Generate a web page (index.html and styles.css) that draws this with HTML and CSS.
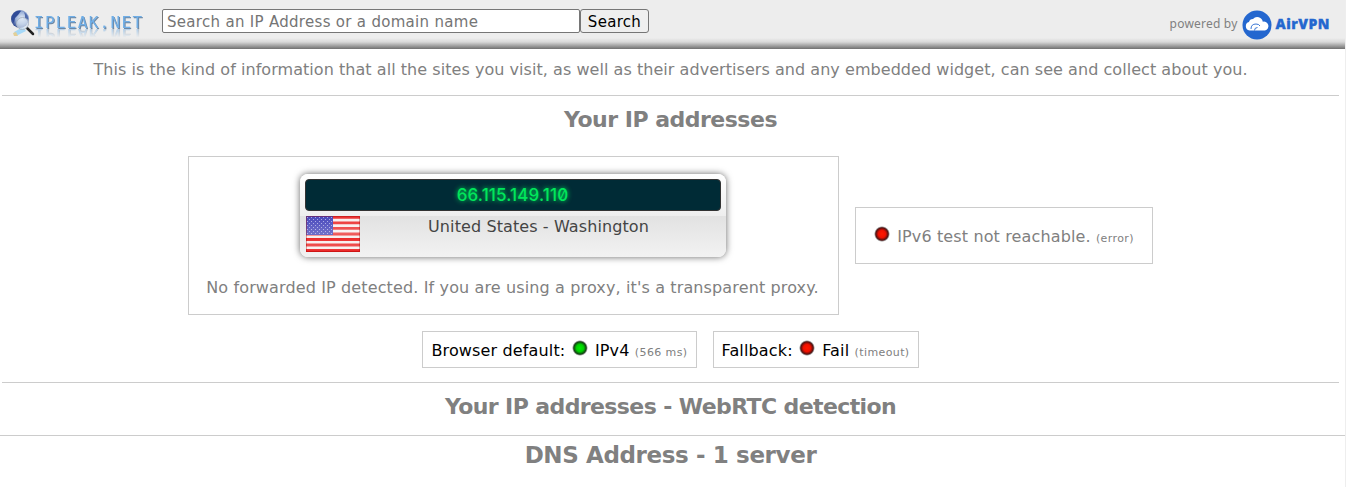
FILE: index.html
```html
<!DOCTYPE html>
<html lang="en">

<head>
    <meta charset="UTF-8">
    <meta name="viewport" content="width=device-width, initial-scale=1.0">
    <title>IP/DNS Detect</title>
    <link rel="stylesheet" href="styles.css">
</head>

<body>
    <div class="header">
        <a class="logo" href="/">
            <svg class="logo-icon" width="26" height="28" viewBox="0 0 26 28">
                <defs>
                    <radialGradient id="globe" cx="0.6" cy="0.45" r="0.65">
                        <stop offset="0" stop-color="#e6edf8" />
                        <stop offset="0.5" stop-color="#9db2d9" />
                        <stop offset="1" stop-color="#1c3684" />
                    </radialGradient>
                </defs>
                <path d="M4 23l9-5 3 4-10 5z" fill="#a5d8f8" />
                <path d="M3 24l3-1 2 4-4 0z" fill="#e3cf97" />
                <path d="M17 19l6 6" stroke="#222" stroke-width="2.5" stroke-linecap="round" />
                <circle cx="10" cy="10" r="9" fill="url(#globe)" />
                <path d="M2 7q3-6 9-5l-3 4-3 3-1 5q-3-3-2-7z" fill="#304b98" />
                <path d="M14 3q5 3 4 8l-3-2 0-3z" fill="#506aac" />
                <circle cx="12.5" cy="14.5" r="6" fill="#dce7f2" fill-opacity="0.65" stroke="#aab5c5" />
            </svg>
            <span class="logo-text">IPLEAK.NET</span>
        </a>
        <form class="search">
            <input type="text" placeholder="Search an IP Address or a domain name">
            <button type="button">Search</button>
        </form>
        <a class="powered" href="#">
            <span class="powered-by">powered by</span>
            <svg width="30" height="30" viewBox="0 0 30 30">
                <circle cx="15" cy="15" r="14.5" fill="#2467cf" />
                <path d="M7.500 20.500a4.300 4.300 0 0 1-.5-8.400 4 4 0 0 1 4-3.200 5.600 5.600 0 0 1 9.800 2.800 4.500 4.500 0 0 1 2.200 8.800z" fill="#fff" />
                <path d="M9 19q0-5 5-5 3 0 4 2M12.500 20.500q0-3 3-3" fill="none" stroke="#2467cf" stroke-width="0.900" />
            </svg>
            <span class="powered-name">AirVPN</span>
        </a>
    </div>

    <div class="content">
        <div class="intro">This is the kind of information that all the sites you visit, as well as their advertisers and any embedded widget, can see and collect about you.</div>

        <div class="section">
            <h2>Your IP addresses</h2>
            <div class="row">
                <div class="box box-ip">
                    <div class="ip-card">
                        <div class="ip">66.115.149.110</div>
                        <div class="ip-info">
                            <svg class="flag" width="54" height="36" viewBox="0 0 54 36">
                                <defs>
                                    <linearGradient id="gloss" x2="0" y2="1">
                                        <stop offset="0" stop-color="#fff" stop-opacity="0.1" />
                                        <stop offset="0.5" stop-color="#fff" stop-opacity="0.3" />
                                        <stop offset="0.6" stop-color="#fff" stop-opacity="0.05" />
                                        <stop offset="0.85" stop-color="#fff" stop-opacity="0.25" />
                                        <stop offset="1" stop-color="#fff" stop-opacity="0" />
                                    </linearGradient>
                                    <pattern id="stars" width="4" height="4" patternUnits="userSpaceOnUse">
                                        <path d="M1 1h1v1h-1zM3 3h1v1h-1z" fill="#9c9ce0" />
                                    </pattern>
                                </defs>
                                <rect width="54" height="36" fill="#f6eeee" />
                                <path d="M0 1.400h54M0 6.900h54M0 12.400h54M0 18h54M0 23.500h54M0 29h54M0 34.500h54" stroke="#ea1c1c" stroke-width="2.800" />
                                <rect width="27" height="19" fill="#3434b4" />
                                <rect width="27" height="19" fill="url(#stars)" />
                                <rect width="54" height="36" fill="url(#gloss)" />
                                <rect x="0.5" y="0.5" width="53" height="35" fill="none" stroke="#900" stroke-opacity="0.350" />
                            </svg>
                            <div class="place">United States - Washington</div>
                        </div>
                    </div>
                    <div class="forwarded">No forwarded IP detected. If you are using a proxy, it's a transparent proxy.</div>
                </div>
                <div class="box box-ipv6">
                    <span class="led led-red"></span>
                    <span>IPv6 test not reachable.</span>
                    <small>(error)</small>
                </div>
            </div>
            <div class="row row-modes">
                <div class="box box-mode">
                    <span>Browser default:</span>
                    <span class="led led-green"></span>
                    <span>IPv4</span>
                    <small>(566 ms)</small>
                </div>
                <div class="box box-mode">
                    <span>Fallback:</span>
                    <span class="led led-red"></span>
                    <span>Fail</span>
                    <small>(timeout)</small>
                </div>
            </div>
        </div>

        <div class="section section-webrtc">
            <h2>Your IP addresses - WebRTC detection</h2>
        </div>
    </div>

    <div class="section section-dns">
        <h2>DNS Address - 1 server</h2>
    </div>
</body>

</html>
```
FILE: styles.css
```css
* {
    box-sizing: border-box;
}

body {
    margin: 0;
    height: 487px;
    overflow: hidden;
    border-right: 1px solid #eeeeee;
    font-family: Verdana, "DejaVu Sans", sans-serif;
    font-size: 16px;
    line-height: 20px;
    color: gray;
    background: #ffffff;
}

a {
    color: inherit;
    text-decoration: none;
}

.header {
    display: flex;
    height: 49px;
    padding: 9px 15px 0 10px;
    background: linear-gradient(#ededed 0, #ededed 38px, #d8d8d8 42px, #707070 49px);
}

.logo {
    display: flex;
    width: 152px;
}

.logo-text {
    height: 18px;
    margin: 5px 0 0 -2px;
    font-family: "DejaVu Sans Mono", monospace;
    font-size: 16px;
    line-height: 18px;
    letter-spacing: 1.3px;
    color: #70aee6;
    text-shadow: 1px 1px 0 #6e88a4;
    -webkit-box-reflect: below -7px linear-gradient(transparent 30%, rgba(0, 0, 0, 0.7));
}

.search {
    display: flex;
    height: 24px;
}

.search input {
    width: 418px;
    padding: 2px 4px 1px;
    border: 1px solid #767676;
    border-radius: 2px;
    font: 15px Verdana, "DejaVu Sans", sans-serif;
    letter-spacing: 0.3px;
}

.search input::placeholder {
    color: #757575;
}

.search button {
    width: 69px;
    padding: 1px 0 0;
    border: 1px solid #767676;
    border-radius: 3px;
    font: 15px Verdana, "DejaVu Sans", sans-serif;
    letter-spacing: 0.3px;
    color: #000000;
    background: #efefef;
}

.powered {
    display: flex;
    align-items: flex-start;
    margin-left: auto;
    font: 12px/30px "Noto Sans", Tahoma, sans-serif;
}

.powered-by {
    letter-spacing: 0.2px;
}

.powered svg {
    margin: 1px 0 0 5px;
}

.powered-name {
    margin-left: 3px;
    font: 800 14px/30px "Open Sans", sans-serif;
    letter-spacing: 0.5px;
    color: #2467cf;
    -webkit-text-stroke: 0.3px #2467cf;
}

.content {
    width: 1337px;
    margin-left: 2px;
}

.intro {
    height: 46px;
    padding-top: 11px;
    letter-spacing: 0.048px;
    text-align: center;
    white-space: nowrap;
}

.section {
    border-top: 1px solid #cccccc;
}

h2 {
    margin: 0;
    padding-top: 10px;
    font-size: 22px;
    line-height: 27px;
    letter-spacing: -0.5px;
    text-align: center;
}

.row {
    display: flex;
    justify-content: center;
    align-items: center;
    gap: 16px;
}

.box {
    border: 1px solid #cccccc;
    white-space: nowrap;
}

.box-ip {
    width: 651px;
    height: 159px;
    margin-top: 23px;
    padding: 17px 2px 0 0;
}

.ip-card {
    width: 426px;
    height: 83px;
    margin: 0 auto;
    padding: 5px;
    border-radius: 8px;
    background: linear-gradient(#ffffff 0, #eeeeee 42px, #e2e2e2 42px, #f2f2f2 83px);
    box-shadow: 0 0 7px rgba(0, 0, 0, 0.6);
}

.ip {
    height: 32px;
    border: 1px solid #333333;
    border-radius: 4px;
    font: 500 17px/31px Inter, sans-serif;
    font-feature-settings: "zero";
    letter-spacing: 0.15px;
    text-align: center;
    color: #00e65b;
    background: #002b36;
    text-shadow: 0 0 5px #00e65b;
}

.ip-info {
    display: flex;
    padding: 5px 0 0 1px;
    color: #444444;
}

.place {
    flex: 1;
    padding: 1px 3px 0 0;
    letter-spacing: 0.1px;
    text-align: center;
}

.forwarded {
    margin-top: 21px;
    letter-spacing: 0.13px;
    text-align: center;
}

.led {
    display: inline-block;
    width: 16px;
    height: 16px;
    margin: 0 2px 0 1px;
    border-radius: 50%;
}

.led-red {
    background: radial-gradient(closest-side, #ff1900 0, #f01000 45%, #501010 78%, #aaaaaa 90%, transparent);
}

.led-green {
    background: radial-gradient(closest-side, #00ee00 0, #00d000 45%, #104010 78%, #aaaaaa 90%, transparent);
}

small {
    font-size: 11px;
    letter-spacing: 0.4px;
}

.box-ipv6 {
    width: 298px;
    height: 57px;
    margin-top: 22px;
    padding: 18px 0 0 17px;
    letter-spacing: 0.13px;
}

.row-modes {
    margin-top: 16px;
}

.box-mode {
    height: 37px;
    padding: 8px;
    letter-spacing: 0.15px;
    color: #000000;
}

.box-mode small {
    color: gray;
}

.section-webrtc {
    height: 53px;
    margin-top: 14px;
}

.section-webrtc h2 {
    letter-spacing: -0.6px;
}

.section-dns h2 {
    padding: 6px 4px 0 0;
    font-size: 23px;
    letter-spacing: -0.38px;
}
```
